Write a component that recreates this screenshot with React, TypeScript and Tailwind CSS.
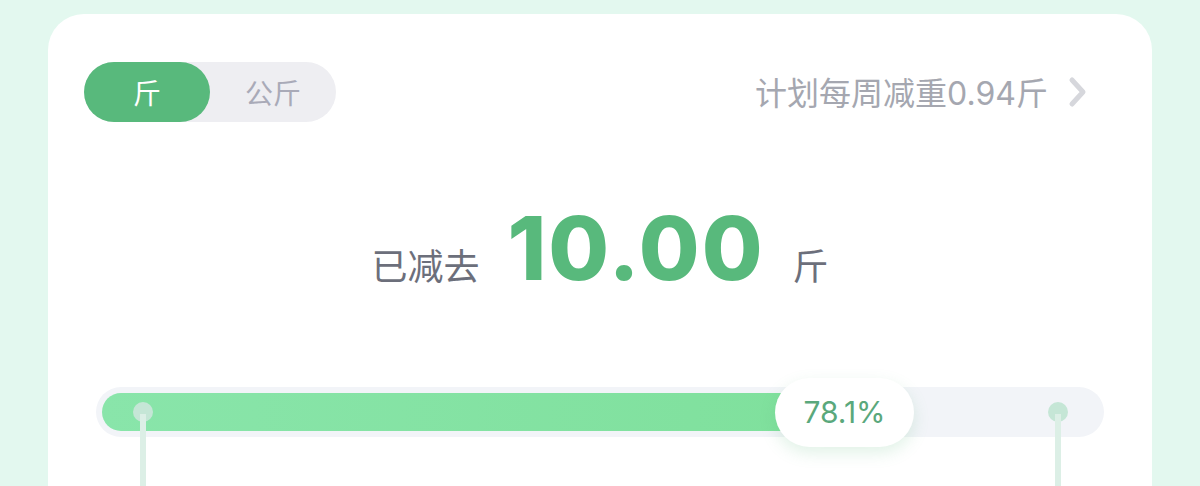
const cjk = '"Noto Sans CJK SC", "Noto Sans", sans-serif';
const num = 'Inter, "Noto Sans CJK SC", sans-serif';

const Marker = ({ left }: { left: number }) => (
  <div className="absolute top-[15px] flex flex-col items-center" style={{ left: left - 10 }}>
    <div className="h-5 w-5 rounded-full bg-[#c5e6d6]" />
    <div className="-mt-2 h-[120px] w-[6px] bg-[#dcefe6]" />
  </div>
);

export default function App() {
  return (
    <div className="h-[486px] overflow-hidden bg-[#e3f8ef] px-12 pt-[14px]">
      <div className="h-[600px] rounded-[36px] bg-white">
        {/* header */}
        <div className="flex items-center justify-between pl-9 pr-[64px] pt-12">
          <div className="flex h-[60px] w-[252px] rounded-full bg-[#eeeef2]" style={{ fontFamily: cjk }}>
            <button className="flex w-[126px] items-center justify-center rounded-full bg-[#58b97c] text-[28px] text-white">
              斤
            </button>
            <button className="flex w-[126px] items-center justify-center text-[28px] text-[#a9aab8]">
              公斤
            </button>
          </div>
          <div className="flex items-center gap-5 text-[#a5a7b0]">
            <span className="text-[32px] leading-none" style={{ fontFamily: num }}>
              <span style={{ fontFamily: cjk }}>计划每周减重</span>0.94<span style={{ fontFamily: cjk }}>斤</span>
            </span>
            <svg width="20" height="32" viewBox="0 0 20 32" fill="none">
              <path d="M4 4 L15 16 L4 28" stroke="#d6d7dc" strokeWidth="5" strokeLinecap="round" strokeLinejoin="round" />
            </svg>
          </div>
        </div>

        {/* total */}
        <div className="mt-[82px] flex items-baseline justify-center">
          <span className="text-[36px] text-[#6c6f7b]" style={{ fontFamily: cjk }}>已减去</span>
          <span
            className="ml-7 mr-7 text-[88px] font-extrabold leading-none tracking-[2px] text-[#58b97c]"
            style={{ fontFamily: num }}
          >
            10.00
          </span>
          <span className="text-[36px] text-[#6c6f7b]" style={{ fontFamily: cjk }}>斤</span>
        </div>

        {/* progress */}
        <div className="mt-[95px] px-12">
          <div className="relative h-[50px] rounded-full bg-[#f2f4f8] p-[6px]">
            <div className="h-[38px] w-[743px] rounded-full bg-gradient-to-r from-[#89e5aa] to-[#7fe09c]" />
            <Marker left={47} />
            <Marker left={962} />
            <div
              className="absolute left-[679px] top-[-9px] flex h-[69px] w-[139px] items-center justify-center rounded-full bg-white text-[30px] text-[#5aa87c] shadow-[0_6px_16px_rgba(88,185,124,0.18)]"
              style={{ fontFamily: num }}
            >
              78.1%
            </div>
          </div>
        </div>
      </div>
    </div>
  );
}
